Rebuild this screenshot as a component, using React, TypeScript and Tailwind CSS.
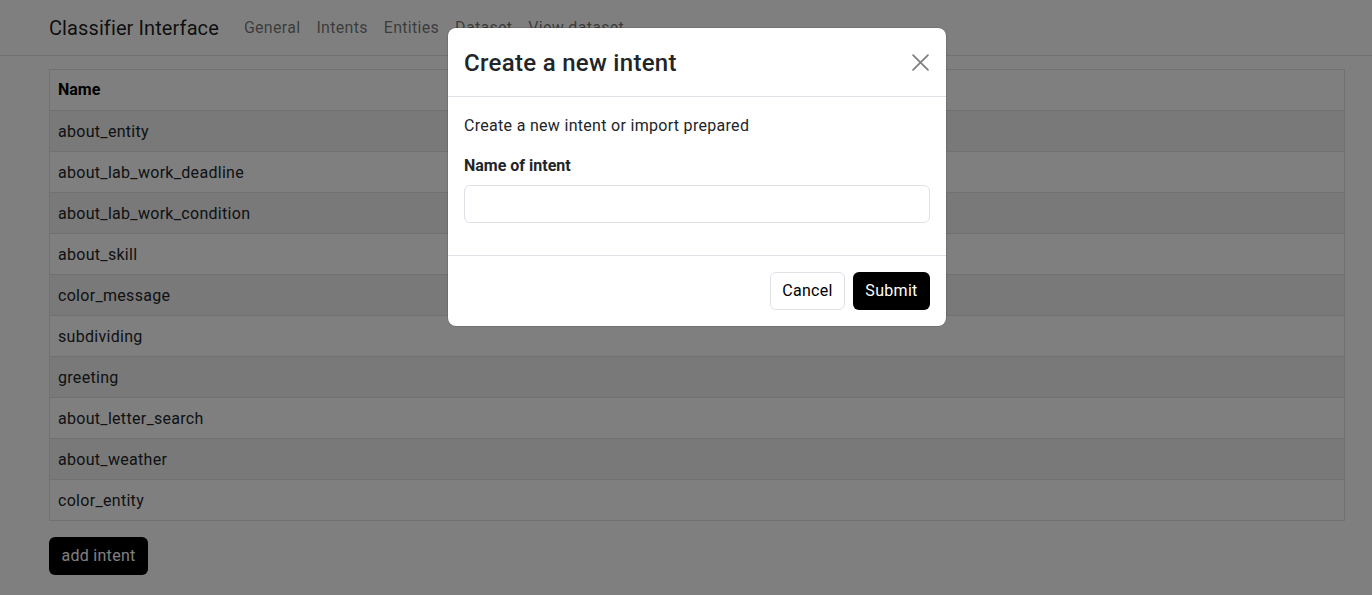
import React from "react";

const rows = [
  "about_entity",
  "about_lab_work_deadline",
  "about_lab_work_condition",
  "about_skill",
  "color_message",
  "subdividing",
  "greeting",
  "about_letter_search",
  "about_weather",
  "color_entity",
];

export default function App() {
  return (
    <div className="relative min-h-[595px] bg-white text-[#212529] tracking-[0.3px] font-['Roboto',_'Noto_Sans',_sans-serif]">
      <nav className="flex items-center h-[56px] border-b border-[#dee2e6] pl-[49px]">
        <span className="text-[20px] leading-[30px] mr-[17px] text-black/90 tracking-[0.1px]">Classifier Interface</span>
        <div className="flex text-[16px] leading-[24px] text-black/55">
          {["General", "Intents", "Entities", "Dataset", "View dataset"].map((l) => (
            <span key={l} className="px-[8px]">{l}</span>
          ))}
        </div>
      </nav>
      <div className="pl-[49px] pr-[27px] pt-[13px]">
        <div className="border border-[#dee2e6]">
          <div className="px-[8px] pt-[8px] pb-[8px] text-[16px] leading-[24px] font-bold border-b border-[#dee2e6] text-black tracking-normal">Name</div>
          {rows.map((r, i) => (
            <div
              key={r}
              className={`px-[8px] pt-[9px] pb-[7px] text-[16px] leading-[24px] ${i < rows.length - 1 ? "border-b border-[#dee2e6]" : ""} ${i % 2 === 0 ? "bg-[#f2f2f2]" : "bg-white"}`}
            >
              {r}
            </div>
          ))}
        </div>
        <button className="mt-[16px] h-[38px] w-[99px] rounded-[6px] bg-black text-white text-[16px] leading-[24px]">add intent</button>
      </div>

      <div className="absolute inset-0 bg-black/50" />

      <div className="absolute left-[448px] top-[28px] w-[498px] bg-white rounded-[8px] shadow-[0_0_0_1px_rgba(0,0,0,0.1)]">
        <div className="flex items-center justify-between h-[69px] px-[16px] border-b border-[#dee2e6]">
          <h4 className="text-[24px] leading-[36px] font-medium text-[#212529] pt-[1px]">Create a new intent</h4>
          <button className="w-[24px] h-[24px] flex items-center justify-center opacity-50 mr-[-2px]">
            <svg width="17" height="17" viewBox="0 0 16 16">
              <path d="M1 1 L15 15 M15 1 L1 15" stroke="#000" strokeWidth="1.6" strokeLinecap="round" />
            </svg>
          </button>
        </div>
        <div className="p-[16px] border-b border-[#dee2e6]">
          <p className="text-[16px] leading-[24px] mb-[16px] pt-[1px]">Create a new intent or import prepared</p>
          <label className="block text-[16px] leading-[24px] font-bold mb-[7px] tracking-normal">Name of intent</label>
          <input className="block w-full h-[38px] border border-[#dee2e6] rounded-[6px] px-[12px] mb-[16px]" />
        </div>
        <div className="flex justify-end gap-[8px] px-[16px] py-[16px]">
          <button className="h-[38px] w-[75px] rounded-[6px] border border-[#dee2e6] bg-white text-[16px] leading-[24px] text-black">Cancel</button>
          <button className="h-[38px] w-[77px] rounded-[6px] bg-black text-white text-[16px] leading-[24px]">Submit</button>
        </div>
      </div>
    </div>
  );
}
